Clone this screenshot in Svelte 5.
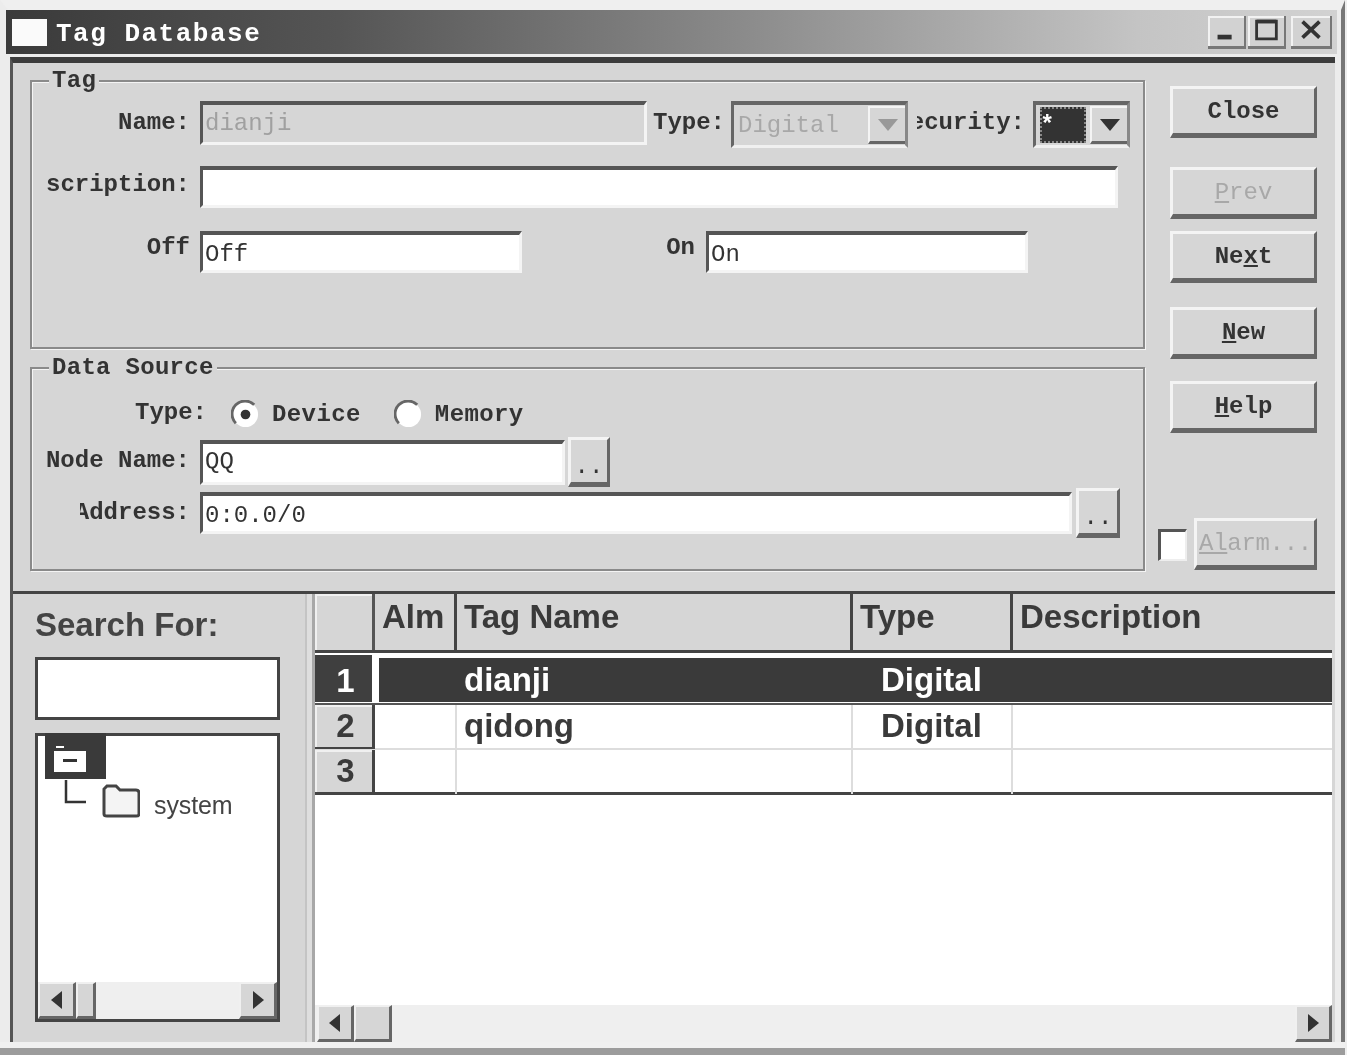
<script>
	const columns = ["Alm", "Tag Name", "Type", "Description"];
	const rows = [
		{ id: 1, name: "dianji", type: "Digital", selected: true },
		{ id: 2, name: "qidong", type: "Digital" },
		{ id: 3, name: "", type: "" },
	];
</script>

{#snippet arrow(right)}
	<svg class="arrow" viewBox="0 0 12 18" width="12" height="18">
		<path fill="#333" d={right ? "M1 0 12 9 1 18z" : "M11 0 0 9 11 18z"} />
	</svg>
{/snippet}

{#snippet caret(color)}
	<svg viewBox="0 0 20 12" width="20" height="12"><path fill={color} d="M0 0h20L10 12z" /></svg>
{/snippet}

{#snippet radio(checked)}
	<svg class="radio" viewBox="0 0 30 30" width="29" height="29">
		<circle cx="15" cy="15" r="13" fill="#fff" />
		<path fill="none" stroke="#666" stroke-width="3" d="M24 5A13 13 0 0 0 5 24" />
		{#if checked}<circle cx="15" cy="15" r="5" fill="#333" />{/if}
	</svg>
{/snippet}

<div class="page">
	<div class="window">
		<header class="title">
			<div class="app-icon"></div>
			<span class="title-text">Tag Database</span>
			<div class="controls">
				<button class="ctl">
					<svg viewBox="0 0 36 33" width="34" height="31"><path fill="#333" d="M9 21h15v5H9z" /></svg>
				</button>
				<button class="ctl">
					<svg viewBox="0 0 36 33" width="34" height="31"><path fill="none" stroke="#333" stroke-width="3" d="M8 6.5h21v19H8z" /><path fill="#333" d="M8 5h21v4H8z" /></svg>
				</button>
				<button class="ctl close-x">
					<svg viewBox="0 0 36 33" width="34" height="31"><path fill="none" stroke="#333" stroke-width="4" d="M9 7l18 17M27 7 9 24" /></svg>
				</button>
			</div>
		</header>

		<div class="client">
			<section class="top">
				<div class="groups">
					<div class="group tag-group">
						<span class="legend">Tag</span>
						<div class="row r-name">
							<span class="label">Name:</span>
							<input class="field name-field" value="dianji" disabled />
							<span class="label type-label">Type:</span>
							<div class="combo type-combo">
								<span class="combo-text">Digital</span>
								<span class="combo-btn">{@render caret("#999")}</span>
							</div>
							<span class="label sec-label">Security:</span>
							<div class="combo sec-combo">
								<span class="sec-value">*</span>
								<span class="combo-btn">{@render caret("#333")}</span>
							</div>
						</div>
						<div class="row r-desc">
							<span class="label">Description:</span>
							<input class="field desc-field" value="" />
						</div>
						<div class="row r-state">
							<span class="label">Off</span>
							<input class="field state-field" value="Off" />
							<span class="label on-label">On</span>
							<input class="field state-field" value="On" />
						</div>
					</div>

					<div class="group source-group">
						<span class="legend">Data Source</span>
						<div class="row r-type">
							<span class="label src-type">Type:</span>
							{@render radio(true)}
							<span class="mono device">Device</span>
							{@render radio(false)}
							<span class="mono memory">Memory</span>
						</div>
						<div class="row r-node">
							<span class="label">Node Name:</span>
							<input class="field node-field" value="QQ" />
							<button class="btn dots node-dots">..</button>
						</div>
						<div class="row r-addr">
							<span class="label addr-label">Address:</span>
							<input class="field addr-field" value="0:0.0/0" />
							<button class="btn dots addr-dots">..</button>
						</div>
					</div>
				</div>

				<div class="actions">
					<button class="btn act close">Close</button>
					<button class="btn act prev off"><u>P</u>rev</button>
					<button class="btn act next">Ne<u>x</u>t</button>
					<button class="btn act new"><u>N</u>ew</button>
					<button class="btn act help"><u>H</u>elp</button>
					<div class="alarm">
						<span class="check"></span>
						<button class="btn off alarm-btn"><u>Al</u>arm...</button>
					</div>
				</div>
			</section>

			<section class="bottom">
				<aside class="side">
					<div class="search-title">Search For:</div>
					<div class="search-box"></div>
					<div class="tree">
						<div class="root-node">
							<svg viewBox="0 0 32 26" width="32" height="26">
								<path fill="#fff" d="M0 5h10V2H2V0h8v5h22v21H0z" />
								<path fill="#333" d="M9 13h14v3H9z" />
							</svg>
						</div>
						<div class="child-node">
							<svg viewBox="0 0 84 42" width="84" height="42">
								<path fill="none" stroke="#333" stroke-width="2.5" d="M10 0v22h20" />
								<path fill="#f4f4f4" stroke="#444" stroke-width="3" d="M48 12V9l3-3h9l4 4h16q3 0 3 3v21q0 2-3 2H51q-3 0-3-2z" />
							</svg>
							<span class="system">system</span>
						</div>
						<div class="tree-scroll">
							<span class="sbtn tree-btn">{@render arrow(false)}</span>
							<span class="thumb tree-thumb"></span>
							<span class="track"></span>
							<span class="sbtn tree-btn">{@render arrow(true)}</span>
						</div>
					</div>
				</aside>
				<div class="divider"></div>
				<div class="table">
					<div class="grid-row head">
						<div class="corner"></div>
						{#each columns as col}
							<div class="th">{col}</div>
						{/each}
					</div>
					{#each rows as row}
						<div class="grid-row body-row" class:selected={row.selected} class:last={row.id === 3}>
							<div class="rh">{row.id}</div>
							<div class="td alm"></div>
							<div class="td name">{row.name}</div>
							<div class="td type">{row.type}</div>
							<div class="td"></div>
						</div>
					{/each}
					<div class="blank"></div>
					<div class="grid-scroll">
						<span class="sbtn grid-btn">{@render arrow(false)}</span>
						<span class="thumb grid-thumb"></span>
						<span class="track"></span>
						<span class="sbtn grid-btn">{@render arrow(true)}</span>
					</div>
				</div>
			</section>
		</div>
		<div class="foot"></div>
	</div>
</div>

<style>
:global(body) {
	margin: 0;
	background: #eee;
}
.page {
	width: 1347px;
	height: 1055px;
	box-sizing: border-box;
	padding-right: 2px;
	background: #eee;
	overflow: hidden;
}
.window {
	height: 100%;
	box-sizing: border-box;
	display: flex;
	flex-direction: column;
	background: #ececec;
	border-top: 10px solid #efefef;
	border-left: 8px solid #ececec;
	border-right: 4px solid #777;
	color: #333;
	filter: blur(0.6px);
}
.title {
	display: flex;
	align-items: center;
	height: 44px;
	margin: 0 4px 0 -2px;
	flex: none;
	background: linear-gradient(90deg, #3a3a3a 0%, #555 25%, #8a8a8a 55%, #c4c4c4 85%, #d2d2d2 100%);
}
.app-icon {
	width: 35px;
	height: 27px;
	margin-left: 6px;
	background: #fafafa;
}
.title-text {
	margin: 3px 0 0 9px;
	font: bold 26px "Liberation Mono", monospace;
	letter-spacing: 1.5px;
	color: #fff;
}
.controls {
	display: flex;
	margin-left: auto;
	margin-right: 5px;
	gap: 2px;
}
.ctl {
	width: 38px;
	height: 33px;
	padding: 0;
	display: flex;
	align-items: center;
	justify-content: center;
	background: #d2d2d2;
	border: 0;
	border-right: 2px solid #777;
	border-bottom: 3px solid #777;
	box-shadow: inset 2px 2px 0 #f2f2f2;
}
.close-x {
	margin-left: 3px;
	width: 41px;
}
.client {
	flex: 1;
	display: flex;
	flex-direction: column;
	margin: 3px 6px 0 2px;
	border-top: 6px solid #3c3c3c;
	border-left: 3px solid #555;
	background: #d6d6d6;
	min-height: 0;
}
.top {
	height: 531px;
	flex: none;
	box-sizing: border-box;
	display: flex;
	border-bottom: 3px solid #444;
}
.groups {
	width: 1115px;
	margin: 17px 0 0 17px;
}
.group {
	position: relative;
	box-sizing: border-box;
	border: 2px solid #8a8a8a;
	box-shadow: 1px 1px 0 #f4f4f4, inset 1px 1px 0 #f4f4f4;
}
.tag-group {
	height: 269px;
}
.source-group {
	height: 204px;
	margin-top: 18px;
}
.legend {
	position: absolute;
	left: 17px;
	top: -15px;
	padding: 0 3px;
	background: #d6d6d6;
	font: bold 24px/28px "Liberation Mono", monospace;
	letter-spacing: 0.3px;
}
.row {
	display: flex;
	align-items: center;
}
.r-name {
	height: 47px;
	margin-top: 19px;
}
.r-desc {
	height: 42px;
	margin-top: 18px;
}
.r-state {
	height: 42px;
	margin-top: 23px;
}
.r-type {
	height: 30px;
	margin-top: 30px;
}
.r-node {
	height: 50px;
	margin-top: 8px;
}
.r-addr {
	height: 50px;
	margin-top: 1px;
}
.label,
.mono,
.field,
.btn,
.combo-text {
	font: bold 24px "Liberation Mono", monospace;
	color: #333;
}
.mono {
	letter-spacing: 0.4px;
}
.label {
	display: flex;
	flex: none;
	justify-content: flex-end;
	width: 145px;
	margin: -4px 10px 0 13px;
	overflow: hidden;
	white-space: nowrap;
}
.r-desc .label {
	margin-top: -6px;
}
.r-state .label {
	margin-top: -10px;
}
.type-label {
	width: 72px;
	margin: -4px 0 0 6px;
}
.sec-label {
	width: 108px;
	margin: -4px 0 0 9px;
}
.r-state .on-label {
	width: 30px;
	margin: -10px 0 0 143px;
}
.addr-label {
	width: 110px;
	margin: -1px 10px 0 48px;
}
.src-type {
	width: 175px;
	margin: -4px 24px 0 0;
}
.field {
	box-sizing: border-box;
	height: 42px;
	padding: 0 0 0 2px;
	background: #fff;
	font-weight: normal;
	outline: none;
	border-style: solid;
	border-width: 4px 3px 3px 3px;
	border-color: #555 #f4f4f4 #f4f4f4 #555;
	border-radius: 0;
}
.name-field {
	width: 447px;
	height: 44px;
	margin-top: -3px;
	background: #d6d6d6;
	color: #a0a0a0;
}
.desc-field {
	width: 918px;
}
.state-field {
	width: 322px;
	padding-top: 3px;
}
.r-state .state-field:last-child {
	margin-left: 11px;
}
.node-field {
	width: 365px;
	height: 45px;
	padding-bottom: 3px;
}
.addr-field {
	width: 872px;
	padding-top: 3px;
}
.combo {
	box-sizing: border-box;
	height: 47px;
	display: flex;
	align-items: center;
	justify-content: space-between;
	margin-left: 6px;
	padding: 2px 0 2px 4px;
	border-style: solid;
	border-width: 4px 3px 3px 3px;
	border-color: #666 #888 #f0f0f0 #666;
}
.type-combo {
	width: 177px;
}
.combo-text {
	color: #a8a8a8;
	font-weight: normal;
}
.sec-combo {
	width: 97px;
	margin-left: 8px;
}
.sec-value {
	width: 46px;
	height: 36px;
	background: #333;
	color: #fff;
	outline: 2px dotted #888;
	outline-offset: -2px;
	font: bold 24px/38px "Liberation Mono", monospace;
}
.combo-btn {
	box-sizing: border-box;
	width: 37px;
	height: 38px;
	display: flex;
	align-items: center;
	justify-content: center;
	background: #d6d6d6;
	border-top: 2px solid #f4f4f4;
	border-left: 2px solid #f4f4f4;
	border-bottom: 3px solid #666;
}
.radio {
	flex: none;
}
.device {
	margin: 0 33px 0 12px;
}
.memory {
	margin-left: 12px;
}
.btn {
	box-sizing: border-box;
	padding: 0;
	background: #d6d6d6;
	border-style: solid;
	border-width: 3px 3px 5px 3px;
	border-color: #f4f4f4 #666 #666 #f4f4f4;
	border-radius: 0;
}
.dots {
	height: 50px;
	padding-top: 10px;
	font-weight: normal;
}
.node-dots {
	width: 42px;
	margin-left: 3px;
}
.addr-dots {
	width: 44px;
	margin-left: 4px;
}
.off,
.off u {
	color: #a8a8a8;
	font-weight: normal;
}
.actions {
	flex: 1;
	display: flex;
	flex-direction: column;
	align-items: flex-start;
	padding: 23px 0 21px 25px;
}
.act {
	width: 147px;
	height: 52px;
}
.prev {
	margin-top: 29px;
}
.next {
	margin-top: 12px;
}
.new {
	margin-top: 24px;
}
.help {
	margin-top: 22px;
}
.alarm {
	display: flex;
	align-items: flex-end;
	margin: auto 0 0 -12px;
}
.check {
	box-sizing: border-box;
	width: 29px;
	height: 32px;
	margin: 0 7px 9px 0;
	background: #fff;
	border-style: solid;
	border-width: 3px 2px 2px 3px;
	border-color: #555 #eee #eee #555;
}
.alarm-btn {
	width: 123px;
	height: 52px;
	letter-spacing: -0.3px;
}
.bottom {
	flex: 1;
	display: flex;
	min-height: 0;
}
.side {
	width: 292px;
	flex: none;
	box-sizing: border-box;
	padding-left: 22px;
}
.search-title {
	margin-top: 11px;
	font: bold 33px/40px "Liberation Sans", sans-serif;
	color: #444;
}
.search-box {
	box-sizing: border-box;
	width: 245px;
	height: 63px;
	margin-top: 12px;
	background: #fff;
	border: 3px solid #444;
}
.tree {
	box-sizing: border-box;
	width: 245px;
	height: 289px;
	margin-top: 13px;
	padding: 0 0 0 7px;
	display: flex;
	flex-direction: column;
	background: #fff;
	border: 3px solid #444;
}
.root-node {
	width: 61px;
	height: 46px;
	margin-top: -3px;
	box-sizing: border-box;
	padding: 13px 0 0 9px;
	background: #3a3a3a;
}
.child-node {
	display: flex;
	align-items: center;
	margin: 1px 0 0 11px;
	height: 42px;
}
.system {
	margin: 8px 0 0 14px;
	font: 25px "Liberation Sans", sans-serif;
	letter-spacing: -0.1px;
	color: #444;
}
.tree-scroll,
.grid-scroll {
	display: flex;
	align-items: stretch;
	flex: none;
}
.tree-scroll {
	height: 37px;
	margin: auto 0 0 -7px;
}
.sbtn,
.thumb {
	box-sizing: border-box;
	display: flex;
	align-items: center;
	justify-content: center;
	background: #d6d6d6;
	border-style: solid;
	border-width: 2px 3px 3px 2px;
	border-color: #f0f0f0 #666 #666 #f0f0f0;
}
.track {
	flex: 1;
	background: #efefef;
}
.tree-btn {
	width: 38px;
}
.tree-thumb {
	width: 20px;
}
.divider {
	width: 10px;
	flex: none;
	box-sizing: border-box;
	background: #dedede;
	border-left: 2px solid #c4c4c4;
	border-right: 3px solid #a8a8a8;
}
.table {
	width: 1017px;
	flex: none;
	display: flex;
	flex-direction: column;
	background: #fff;
}
.grid-row {
	display: grid;
	grid-template-columns: 60px 82px 396px 160px 1fr;
	font: bold 33px "Liberation Sans", sans-serif;
	color: #3a3a3a;
}
.head {
	height: 59px;
	background: #d6d6d6;
	border-bottom: 3px solid #444;
	box-sizing: border-box;
}
.corner {
	border-right: 3px solid #555;
	box-shadow: inset 2px 2px 0 #f0f0f0;
}
.th {
	padding: 3px 0 0 7px;
	border-right: 3px solid #444;
	line-height: 40px;
}
.th:last-child {
	border-right: 0;
}
.body-row {
	height: 45px;
	box-sizing: border-box;
	border-bottom: 2px solid #ddd;
	line-height: 42px;
}
.body-row.selected {
	height: 52px;
	border-bottom: 2px solid #555;
}
.body-row.last {
	height: 45px;
	border-bottom: 3px solid #444;
}
.rh {
	display: flex;
	align-items: center;
	justify-content: center;
	padding-left: 4px;
	background: #d6d6d6;
	border-right: 3px solid #444;
	border-bottom: 2px solid #444;
	box-shadow: inset 2px 2px 0 #f0f0f0;
}
.selected .rh {
	margin: 2px 3px 5px 0;
	padding-top: 4px;
	background: #3f3f3f;
	color: #fff;
	box-shadow: none;
	border: 0;
}
.td {
	border-right: 2px solid #ddd;
	box-sizing: border-box;
}
.td:last-child {
	border-right: 0;
}
.name {
	padding-left: 7px;
}
.type {
	padding-left: 28px;
}
.selected .td {
	margin: 5px 0;
	background: #3a3a3a;
	color: #fff;
	border-right: 0;
	line-height: 44px;
}
.selected .alm {
	margin-left: 4px;
}
.blank {
	flex: 1;
}
.grid-scroll {
	height: 37px;
	padding-left: 2px;
	background: #efefef;
}
.grid-btn {
	width: 37px;
}
.grid-thumb {
	width: 38px;
}
.foot {
	flex: none;
	height: 13px;
	margin-left: -8px;
	margin-right: -4px;
	box-sizing: border-box;
	border-top: 6px solid #f0f0f0;
	background: #9c9c9c;
}
</style>
